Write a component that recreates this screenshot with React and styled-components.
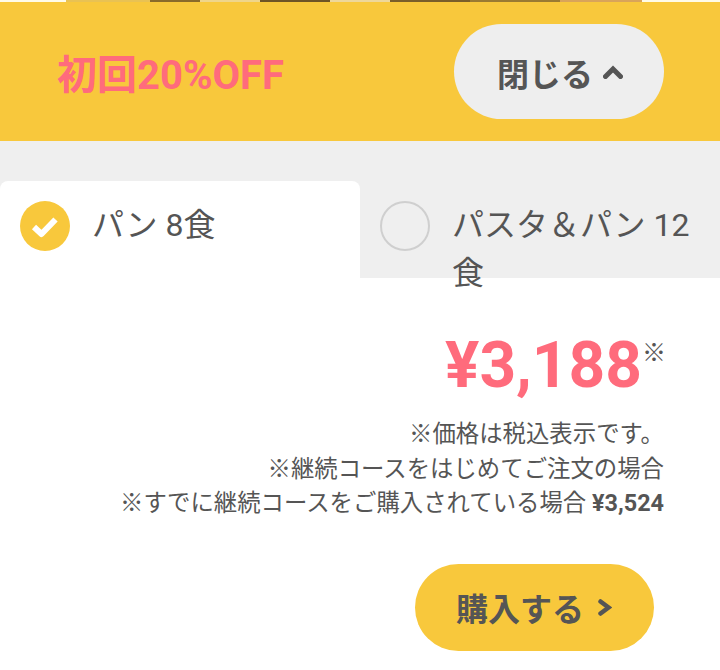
import React from "react";
import styled, { createGlobalStyle } from "styled-components";

const GlobalStyle = createGlobalStyle`
  html, body {
    margin: 0;
    padding: 0;
    background: #fff;
  }
  body {
    font-family: "Roboto", "Noto Sans CJK JP", sans-serif;
    color: #555;
  }
`;

const Root = styled.div`
  width: 720px;
  height: 670px;
  overflow: hidden;
  background: #fff;
`;

// the bottom edge of a photo that sits above the banner
const PhotoEdge = styled.div`
  height: 2px;
  background: linear-gradient(
    to right,
    #fffbe8 0 66px,
    #e9c253 66px 150px,
    #8a6a2a 150px 200px,
    #efd58a 200px 260px,
    #6e5426 260px 330px,
    #eed79a 330px 390px,
    #7a5e2a 390px 470px,
    #9a7a32 470px 560px,
    #d9a45a 560px 642px,
    #fffbe8 642px
  );
`;

const Header = styled.div`
  height: 139px;
  background: #f8c83c;
  display: flex;
  align-items: center;
  justify-content: space-between;
  padding: 0 56px 0 57px;
`;

const Offer = styled.span`
  font-size: 40px;
  font-weight: 700;
  color: #ff6b7c;
`;

const PillButton = styled.button`
  height: ${(p) => p.h}px;
  border: 0;
  border-radius: 50px;
  background: ${(p) => p.bg};
  display: flex;
  align-items: center;
  gap: ${(p) => p.gap}px;
  padding: 0 ${(p) => p.pr}px 0 ${(p) => p.pl}px;
  font-family: "Roboto", "Noto Sans CJK JP", sans-serif;
  font-size: 32px;
  font-weight: 700;
  color: #555;
  cursor: pointer;

  svg {
    flex: none;
  }
`;

const TabBar = styled.div`
  background: #efefef;
  padding-top: 40px;
  display: grid;
  grid-template-columns: 360px 360px;
`;

const Tab = styled.div`
  height: 97px;
  box-sizing: border-box;
  padding: 20px 20px 0 20px;
  display: flex;
  align-items: flex-start;
  gap: 22px;
  background: ${(p) => (p.active ? "#fff" : "transparent")};
  border-radius: 8px 8px 0 0;
`;

const Radio = styled.span`
  flex: none;
  width: 50px;
  height: 50px;
  box-sizing: border-box;
  border-radius: 50%;
  display: flex;
  align-items: center;
  justify-content: center;
  background: ${(p) => (p.checked ? "#f8c83c" : "transparent")};
  border: ${(p) => (p.checked ? "0" : "2px solid #cfcfcf")};
`;

const TabLabel = styled.span`
  font-size: 32px;
  line-height: 48px;
  color: #555;
`;

const Panel = styled.div`
  padding: 56px 56px 0 0;
  display: flex;
  flex-direction: column;
  align-items: flex-end;
`;

const PriceRow = styled.div`
  display: flex;
  align-items: flex-start;
`;

const Price = styled.span`
  font-size: 64px;
  line-height: 64px;
  font-weight: 700;
  color: #ff6b7c;
`;

const Mark = styled.span`
  font-size: 24px;
  line-height: 24px;
  font-weight: 700;
  margin: 7px -2px 0 0;
  color: #555;
`;

const Notes = styled.div`
  margin-top: 19px;
  text-align: right;
  font-size: 23.4px;
  line-height: 34.5px;
  color: #555;

  b {
    font-weight: 700;
  }
`;

const BuyWrap = styled.div`
  margin: 43px 10px 0 0;
`;

const CheckIcon = () => (
  <svg width="50" height="50" viewBox="0 0 50 50">
    <path
      d="M14 26 L21.5 33 L35.5 18.5"
      fill="none"
      stroke="#fff"
      strokeWidth="6"
      strokeLinejoin="round"
    />
  </svg>
);

const ChevronUp = () => (
  <svg width="20" height="14" viewBox="0 0 20 14">
    <path
      d="M2.5 11.5 L10 4 L17.5 11.5"
      fill="none"
      stroke="#555"
      strokeWidth="5"
      strokeLinecap="round"
    />
  </svg>
);

const ChevronRight = () => (
  <svg width="14" height="17" viewBox="0 0 14 17">
    <path
      d="M2.5 2.5 L10.5 8.5 L2.5 14.5"
      fill="none"
      stroke="#555"
      strokeWidth="4.5"
      strokeLinecap="round"
    />
  </svg>
);

export default function App() {
  return (
    <Root>
      <GlobalStyle />
      <PhotoEdge />
      <Header>
        <Offer>初回20%OFF</Offer>
        <PillButton h={95} pl={43} pr={41} gap={10} bg="#eeeeee">
          閉じる
          <ChevronUp />
        </PillButton>
      </Header>
      <TabBar>
        <Tab active>
          <Radio checked>
            <CheckIcon />
          </Radio>
          <TabLabel>パン 8食</TabLabel>
        </Tab>
        <Tab>
          <Radio />
          <TabLabel>パスタ＆パン 12食</TabLabel>
        </Tab>
      </TabBar>
      <Panel>
        <PriceRow>
          <Price>¥3,188</Price>
          <Mark>※</Mark>
        </PriceRow>
        <Notes>
          ※価格は税込表示です。
          <br />
          ※継続コースをはじめてご注文の場合
          <br />
          ※すでに継続コースをご購入されている場合 <b>¥3,524</b>
        </Notes>
        <BuyWrap>
          <PillButton h={87} pl={41} pr={42} gap={14} bg="#f8c83c">
            購入する
            <ChevronRight />
          </PillButton>
        </BuyWrap>
      </Panel>
    </Root>
  );
}
